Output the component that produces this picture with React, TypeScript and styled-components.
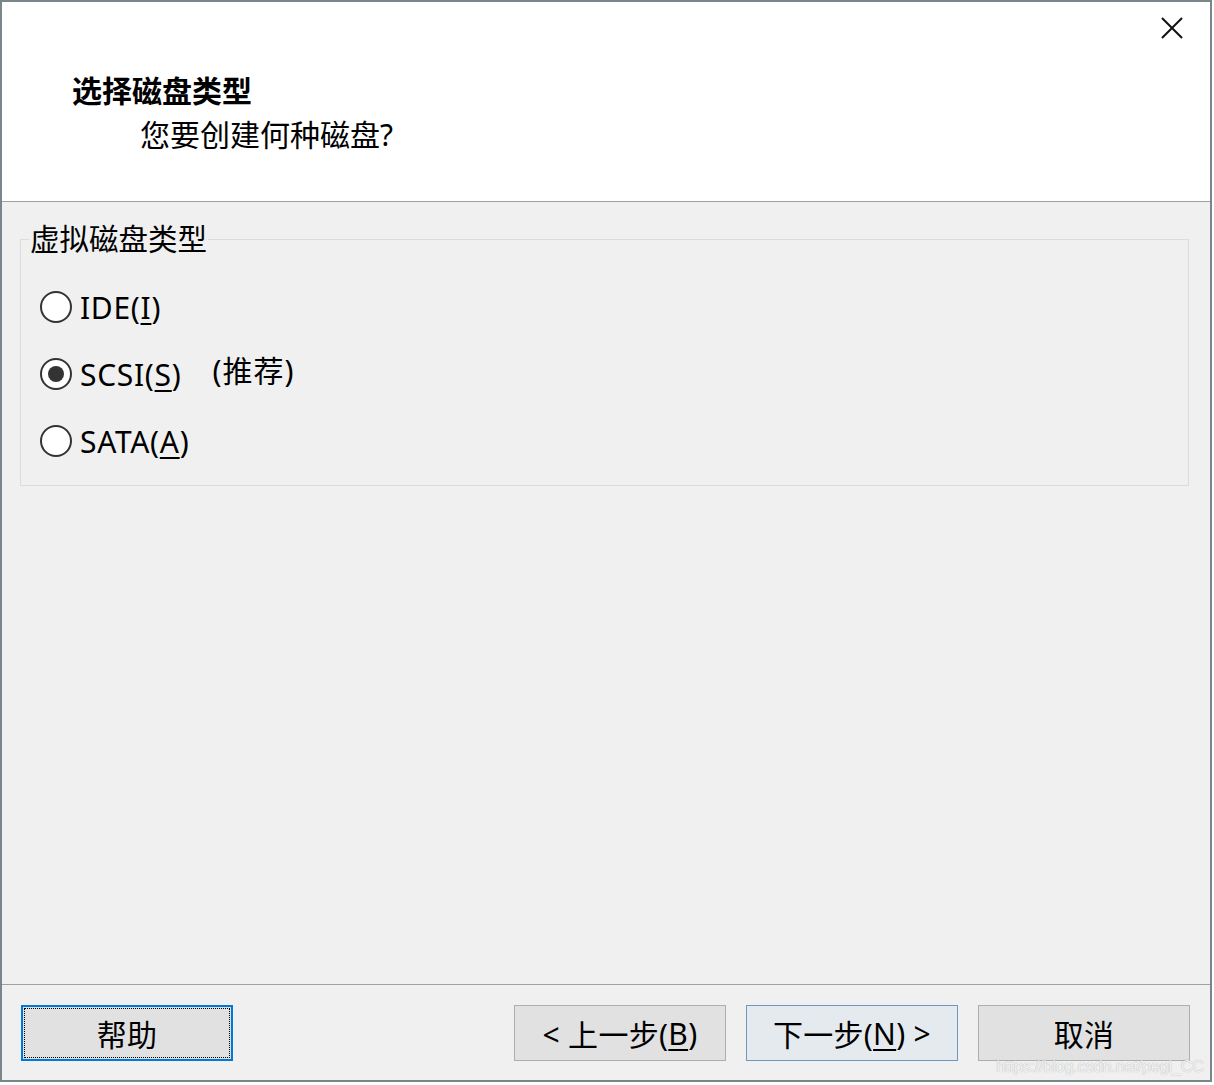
import styled, { createGlobalStyle } from 'styled-components'

const GlobalStyle = createGlobalStyle`
  html, body {
    margin: 0;
    padding: 0;
    background: #ffffff;
  }
  body {
    font-family: "Noto Sans", "Noto Sans CJK SC", sans-serif;
    color: #000;
  }
`

const options = [
  { id: 'ide', label: 'IDE(', key: 'I', note: '' },
  { id: 'scsi', label: 'SCSI(', key: 'S', note: '(推荐)' },
  { id: 'sata', label: 'SATA(', key: 'A', note: '' },
]

export default function App() {
  const selected = 'scsi'
  return (
    <>
      <GlobalStyle />
      <Window>
        <Header>
          <Heading>
            <Title>选择磁盘类型</Title>
            <SubTitle>您要创建何种磁盘?</SubTitle>
          </Heading>
          <Close aria-label="关闭">
            <svg width="22" height="22" viewBox="0 0 22 22">
              <path d="M1 1 L21 21 M21 1 L1 21" stroke="#111" strokeWidth="2" fill="none" />
            </svg>
          </Close>
        </Header>

        <Body>
          <Group>
            <Legend>虚拟磁盘类型</Legend>
            {options.map((o) => (
              <Row key={o.id}>
                <Radio $checked={o.id === selected} />
                <Label>
                  {o.label}
                  <u>{o.key}</u>)
                </Label>
                {o.note && <Note>{o.note}</Note>}
              </Row>
            ))}
          </Group>
        </Body>

        <Footer>
          <Button $focused>
            <FocusRing>帮助</FocusRing>
          </Button>
          <Spacer />
          <Button>
            &lt; 上一步(<u>B</u>)
          </Button>
          <Button $primary>
            下一步(<u>N</u>) &gt;
          </Button>
          <Button>取消</Button>
          <Watermark>https://blog.csdn.net/pegi_CC</Watermark>
        </Footer>
      </Window>
    </>
  )
}

const Window = styled.div`
  width: 1212px;
  height: 1082px;
  box-sizing: border-box;
  border: 2px solid #7a878a;
  display: flex;
  flex-direction: column;
  background: #f0f0f0;
`

const Header = styled.header`
  height: 200px;
  box-sizing: border-box;
  background: #ffffff;
  border-bottom: 1px solid #a0a0a0;
  display: flex;
  justify-content: space-between;
  align-items: flex-start;
`

const Heading = styled.div`
  display: flex;
  flex-direction: column;
  padding: 70px 0 0 70px;
`

const Title = styled.h1`
  margin: 0;
  font-size: 30px;
  line-height: 38px;
  font-weight: 700;
`

const SubTitle = styled.p`
  margin: 6px 0 0 68px;
  font-size: 30px;
  line-height: 38px;
  font-weight: 400;
`

const Close = styled.div`
  width: 22px;
  height: 22px;
  margin: 15px 27px 0 0;
  display: flex;
`

const Body = styled.main`
  flex: 1;
  padding: 20px 21px 0 18px;
  background: #f0f0f0;
`

const Group = styled.fieldset`
  margin: 0;
  padding: 17px 0 11px 19px;
  border: 1px solid #dcdcdc;
  display: flex;
  flex-direction: column;
`

const Legend = styled.legend`
  padding: 0 1px;
  margin-left: -11px;
  font-size: 29.5px;
  line-height: 34px;
  color: #000;
`

const Row = styled.div`
  height: 67px;
  display: flex;
  align-items: center;
`

const Radio = styled.span<{ $checked?: boolean }>`
  width: 32px;
  height: 32px;
  box-sizing: border-box;
  border: 2px solid #333333;
  border-radius: 50%;
  background: #ffffff;
  display: flex;
  align-items: center;
  justify-content: center;
  margin-right: 8px;
  &::after {
    content: '';
    width: 16px;
    height: 16px;
    border-radius: 50%;
    background: #333333;
    display: ${(p) => (p.$checked ? 'block' : 'none')};
  }
`

const Label = styled.span`
  font-size: 30px;
  line-height: 36px;
  letter-spacing: 0.7px;
  margin-top: 2px;
  u {
    text-underline-offset: 4px;
    text-decoration-thickness: 2px;
  }
`

const Note = styled.span`
  font-size: 30px;
  line-height: 36px;
  letter-spacing: 1px;
  margin-left: 31px;
  margin-top: -6px;
`

const Footer = styled.footer`
  position: relative;
  height: 96px;
  box-sizing: border-box;
  border-top: 1px solid #a0a0a0;
  padding: 20px 20px 0 19px;
  display: flex;
  align-items: flex-start;
  gap: 20px;
`

const Spacer = styled.div`
  flex: 1;
`

const Button = styled.div<{ $primary?: boolean; $focused?: boolean }>`
  width: 212px;
  height: 56px;
  box-sizing: border-box;
  display: flex;
  align-items: center;
  justify-content: center;
  font-size: 30px;
  letter-spacing: 0.3px;
  background: ${(p) => (p.$primary ? '#e5eaef' : '#e1e1e1')};
  border: ${(p) =>
    p.$focused ? '2px solid #0078d7' : p.$primary ? '1px solid #6e98c4' : '1px solid #adadad'};
  u {
    text-underline-offset: 4px;
    text-decoration-thickness: 2px;
  }
`

const FocusRing = styled.span`
  align-self: stretch;
  flex: 1;
  margin: 1px;
  border: 1px dotted #000;
  display: flex;
  align-items: center;
  justify-content: center;
`

const Watermark = styled.span`
  position: absolute;
  right: 6px;
  bottom: 4px;
  font-family: "Liberation Sans", sans-serif;
  font-size: 16.5px;
  color: rgba(255, 255, 255, 0.85);
  text-shadow: 0 0 1px rgba(0, 0, 0, 0.35);
  letter-spacing: -0.3px;
`
